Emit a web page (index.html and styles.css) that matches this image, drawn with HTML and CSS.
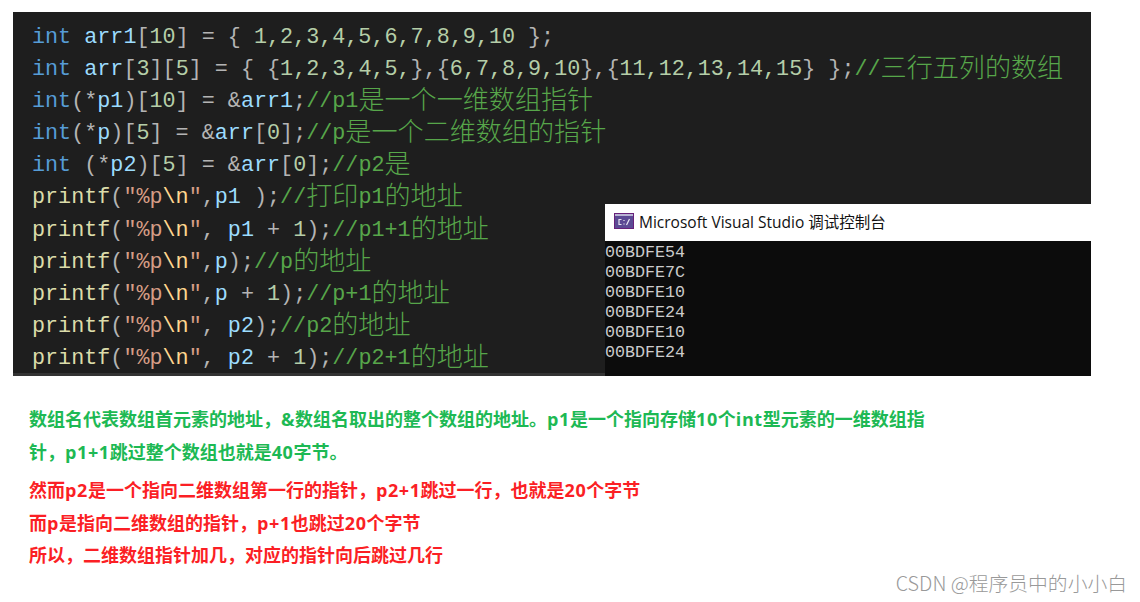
FILE: index.html
```html
<!DOCTYPE html>
<html lang="zh-CN">
<head>
<meta charset="utf-8">
<title>数组指针</title>
<link rel="stylesheet" href="styles.css">
</head>
<body>
<main class="page">
  <section class="shot">
    <pre class="code"><span class="k">int</span> <span class="v">arr1</span><span class="o">[</span><span class="n">10</span><span class="o">] = { </span><span class="n">1,2,3,4,5,6,7,8,9,10</span><span class="o"> };</span>
<span class="k">int</span> <span class="v">arr</span><span class="o">[</span><span class="n">3</span><span class="o">][</span><span class="n">5</span><span class="o">] = { {</span><span class="n">1,2,3,4,5,</span><span class="o">},{</span><span class="n">6,7,8,9,10</span><span class="o">},{</span><span class="n">11,12,13,14,15</span><span class="o">} };</span><span class="c">//<span class="z">三行五列的数组</span></span>
<span class="k">int</span><span class="o">(*</span><span class="v">p1</span><span class="o">)[</span><span class="n">10</span><span class="o">] = &amp;</span><span class="v">arr1</span><span class="o">;</span><span class="c">//p1<span class="z">是一个一维数组指针</span></span>
<span class="k">int</span><span class="o">(*</span><span class="v">p</span><span class="o">)[</span><span class="n">5</span><span class="o">] = &amp;</span><span class="v">arr</span><span class="o">[</span><span class="n">0</span><span class="o">];</span><span class="c">//p<span class="z">是一个二维数组的指针</span></span>
<span class="k">int</span><span class="o"> (*</span><span class="v">p2</span><span class="o">)[</span><span class="n">5</span><span class="o">] = &amp;</span><span class="v">arr</span><span class="o">[</span><span class="n">0</span><span class="o">];</span><span class="c">//p2<span class="z">是</span></span>
<span class="f">printf</span><span class="o">(</span><span class="s">"%p</span><span class="e">\n</span><span class="s">"</span><span class="o">,</span><span class="v">p1</span><span class="o"> );</span><span class="c">//<span class="z">打印</span>p1<span class="z">的地址</span></span>
<span class="f">printf</span><span class="o">(</span><span class="s">"%p</span><span class="e">\n</span><span class="s">"</span><span class="o">, </span><span class="v">p1</span><span class="o"> + </span><span class="n">1</span><span class="o">);</span><span class="c">//p1+1<span class="z">的地址</span></span>
<span class="f">printf</span><span class="o">(</span><span class="s">"%p</span><span class="e">\n</span><span class="s">"</span><span class="o">,</span><span class="v">p</span><span class="o">);</span><span class="c">//p<span class="z">的地址</span></span>
<span class="f">printf</span><span class="o">(</span><span class="s">"%p</span><span class="e">\n</span><span class="s">"</span><span class="o">,</span><span class="v">p</span><span class="o"> + </span><span class="n">1</span><span class="o">);</span><span class="c">//p+1<span class="z">的地址</span></span>
<span class="f">printf</span><span class="o">(</span><span class="s">"%p</span><span class="e">\n</span><span class="s">"</span><span class="o">, </span><span class="v">p2</span><span class="o">);</span><span class="c">//p2<span class="z">的地址</span></span>
<span class="f">printf</span><span class="o">(</span><span class="s">"%p</span><span class="e">\n</span><span class="s">"</span><span class="o">, </span><span class="v">p2</span><span class="o"> + </span><span class="n">1</span><span class="o">);</span><span class="c">//p2+1<span class="z">的地址</span></span></pre>
    <div class="console">
      <div class="titlebar">
        <svg class="vs-icon" viewBox="0 0 20 16" width="20" height="16" aria-hidden="true">
          <rect width="20" height="16" fill="#68217a"/>
          <rect x="1" y="1" width="18" height="14" fill="#5c4a94"/>
          <rect x="1" y="1" width="18" height="2" fill="#b9b3d4"/>
          <path d="M7.5 6.5H5v5h2.5M10 7v1M10 10.5v1M15.5 6l-3 6" fill="none" stroke="#e8e6f2" stroke-width="1.2"/>
        </svg>
        <span class="title">Microsoft Visual Studio 调试控制台</span>
      </div>
      <pre class="output">00BDFE54
00BDFE7C
00BDFE10
00BDFE24
00BDFE10
00BDFE24</pre>
    </div>
  </section>
  <section class="notes">
    <div class="green">
      <p>数组名代表数组首元素的地址，<span class="l">&amp;</span>数组名取出的整个数组的地址。<span class="l">p1</span>是一个指向存储<span class="l">10</span>个<span class="l">int</span>型元素的一维数组指</p>
      <p>针，<span class="l">p1+1</span>跳过整个数组也就是<span class="l">40</span>字节。</p>
    </div>
    <div class="red">
      <p>然而<span class="l">p2</span>是一个指向二维数组第一行的指针，<span class="l">p2+1</span>跳过一行，也就是<span class="l">20</span>个字节</p>
      <p>而<span class="l">p</span>是指向二维数组的指针，<span class="l">p+1</span>也跳过<span class="l">20</span>个字节</p>
      <p>所以，二维数组指针加几，对应的指针向后跳过几行</p>
    </div>
  </section>
  <footer class="mark">CSDN @程序员中的小小白</footer>
</main>
</body>
</html>
```
FILE: styles.css
```css
* {
  box-sizing: border-box;
}

html,
body {
  margin: 0;
  background: #fff;
}

.page {
  position: relative;
  width: 1140px;
  height: 602px;
  padding: 12px 49px 0 13px;
  overflow: hidden;
}

.shot {
  position: relative;
  height: 364px;
  background: #1e1e1e;
  border-bottom: 3px solid #333;
}

.code {
  margin: 0;
  padding: 10px 0 0 19px;
  font-family: "Liberation Mono", "Noto Sans CJK SC", monospace;
  font-size: 21.75px;
  line-height: 32.1px;
  color: #b4b4b4;
}

.z {
  display: inline-block;
  font-family: "Noto Sans CJK SC", sans-serif;
  font-size: 26.1px;
  font-weight: 300;
  line-height: 20px;
  vertical-align: -2px;
}

.k { color: #569cd6; }
.v { color: #9cdcfe; }
.n { color: #b5cea8; }
.o { color: #b4b4b4; }
.f { color: #dcdcaa; }
.s { color: #d69d85; }
.e { color: #ffd68f; }
.c { color: #57a64a; }

.console {
  position: absolute;
  right: 0;
  top: 192px;
  width: 486px;
  height: 172px;
  background: #0c0c0c;
}

.titlebar {
  display: flex;
  align-items: center;
  gap: 5px;
  height: 37px;
  padding: 0 0 3px 9px;
  background: #fff;
}

.vs-icon {
  flex: none;
}

.title {
  font-family: "Open Sans", "Noto Sans CJK SC", sans-serif;
  font-size: 15.5px;
  color: #111;
}

.output {
  margin: 0;
  padding-top: 2px;
  font-family: "Liberation Mono", monospace;
  font-size: 16.67px;
  line-height: 20px;
  color: #ccc;
}

.notes {
  display: flex;
  flex-direction: column;
  gap: 6px;
  padding: 27px 0 0 16px;
  font-family: "Open Sans", "Noto Sans CJK SC", sans-serif;
  font-size: 18px;
  font-weight: 700;
  white-space: nowrap;
}

.notes p {
  margin: 0;
  height: 32.5px;
  line-height: 32.5px;
}

.l {
  letter-spacing: 0.6px;
}

.green {
  color: #1db954;
}

.red {
  color: #fb1f25;
}

.mark {
  position: absolute;
  right: 13px;
  bottom: 5px;
  font-family: "Noto Sans CJK SC", sans-serif;
  font-size: 19.8px;
  font-weight: 300;
  color: #999;
}
```
